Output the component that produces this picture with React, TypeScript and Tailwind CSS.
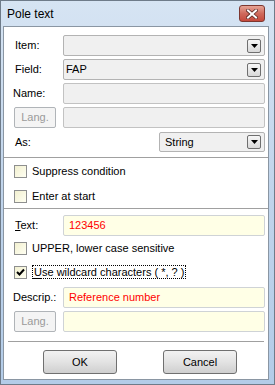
import React from "react";

function DropBtn() {
  return (
    <div className="w-[14px] h-[14px] shrink-0 border border-[#6f6f6f] rounded-[2px] bg-gradient-to-b from-[#f7f7f7] to-[#d9d9d9] flex items-center justify-center">
      <svg width="7" height="4" viewBox="0 0 7 4">
        <path d="M0 0H7L3.5 4Z" fill="#000" />
      </svg>
    </div>
  );
}

function Combo({ text }: { text?: string }) {
  return (
    <div className="flex-1 h-[21px] border border-[#b3b3b3] rounded-[2px] bg-[#f0f0f0] flex items-center pl-[2px] pr-[3px]">
      <span className="flex-1 text-black">{text}</span>
      <DropBtn />
    </div>
  );
}

function Disabled() {
  return <div className="flex-1 h-[21px] border border-[#c2c2c2] rounded-[2px] bg-[#f0f0f0]" />;
}

function Yellow({ text }: { text?: string }) {
  return (
    <div className="flex-1 h-[21px] border border-[#cfd3d6] rounded-[2px] bg-[#ffffe6] flex items-center pl-[5px] text-[#ff0000]">
      {text}
    </div>
  );
}

function LangBtn() {
  return (
    <div className="w-[42px] h-[21px] shrink-0 border border-[#b0b4b8] rounded-[2px] bg-[#f4f4f4] text-[#9a9a9a] flex items-center justify-center">
      Lang.
    </div>
  );
}

function Check({ checked }: { checked?: boolean }) {
  return (
    <div className="w-[13px] h-[13px] shrink-0 border border-[#8e8f8f] bg-gradient-to-br from-[#f2f0d0] to-[#fffff2] flex items-center justify-center">
      {checked && (
        <svg width="9" height="9" viewBox="0 0 9 9">
          <path d="M1 4L3.5 6.5L8 1.5" stroke="#000" strokeWidth="2" fill="none" />
        </svg>
      )}
    </div>
  );
}

function Row({ label, children, lx = 11 }: { label: React.ReactNode; children: React.ReactNode; lx?: number }) {
  return (
    <div className="flex items-center pr-[3px]">
      <div className={lx === 9 ? "w-[59px] pl-[9px]" : "w-[59px] pl-[11px]"}>{label}</div>
      {children}
    </div>
  );
}

export default function App() {
  return (
    <div className="w-[275px] h-[385px] border border-[#6e7b89] bg-gradient-to-b from-[#d6e4f3] via-[#c0d4eb] to-[#b3cce8] flex flex-col font-['Liberation_Sans',Arial,sans-serif] text-[11px] text-black leading-none select-none">
      <div className="h-[25px] flex items-center relative pl-[6px]">
        <span className="text-[12px] text-black mt-[1px]">Pole text</span>
        <div className="absolute left-[238px] top-[4px] w-[26px] h-[17px] rounded-[3px] border border-[#7d3730] bg-gradient-to-b from-[#e6a496] via-[#cf6a5c] to-[#c5493c] flex items-center justify-center">
          <svg width="12" height="10" viewBox="0 0 12 10">
            <path d="M2 1.5L10 8.5M10 1.5L2 8.5" stroke="#5b2a25" strokeWidth="3.6" strokeLinecap="square" />
            <path d="M2 1.5L10 8.5M10 1.5L2 8.5" stroke="#fff" strokeWidth="2" strokeLinecap="square" />
          </svg>
        </div>
      </div>
      <div className="ml-[2px] mr-[5px] mb-[4px] flex-1 border border-[#8a96a3] bg-white flex flex-col">
        <div className="mt-[8px]">
          <Row label="Item:">
            <Combo />
          </Row>
        </div>
        <div className="mt-[3px]">
          <Row label="Field:">
            <Combo text="FAP" />
          </Row>
        </div>
        <div className="mt-[3px]">
          <Row label="Name:" lx={9}>
            <Disabled />
          </Row>
        </div>
        <div className="mt-[3px] flex items-center pr-[3px] pl-[10px]">
          <LangBtn />
          <div className="w-[7px]" />
          <Disabled />
        </div>
        <div className="mt-[4px] flex items-center pr-[3px]">
          <div className="w-[155px] pl-[11px]">As:</div>
          <div className="flex-1 h-[20px] border border-[#b3b3b3] rounded-[2px] bg-[#f0f0f0] flex items-center pl-[5px] pr-[3px]">
            <span className="flex-1">String</span>
            <DropBtn />
          </div>
        </div>
        <div className="mt-[5px] h-px bg-[#a0a0a0]" />
        <div className="mt-[7px] h-[13px] flex items-center pl-[10px] gap-[5px]">
          <Check />
          <span>Suppress condition</span>
        </div>
        <div className="mt-[12px] h-[13px] flex items-center pl-[10px] gap-[5px]">
          <Check />
          <span>Enter at start</span>
        </div>
        <div className="mt-[5px] h-px bg-[#a0a0a0]" />
        <div className="mt-[6px]">
          <Row label={<span><span className="underline">T</span>ext:</span>}>
            <Yellow text="123456" />
          </Row>
        </div>
        <div className="mt-[6px] h-[13px] flex items-center pl-[10px] gap-[5px]">
          <Check />
          <span>UPPER, lower case sensitive</span>
        </div>
        <div className="mt-[10px] h-[14px] flex items-center pl-[10px] gap-[5px]">
          <Check checked />
          <span className="h-[14px] border border-dotted border-black flex items-center px-[1px] underline-offset-2">
            <span><span className="underline">U</span>se wildcard characters ( *, ? )</span>
          </span>
        </div>
        <div className="mt-[8px]">
          <Row label="Descrip.:" lx={9}>
            <Yellow text="Reference number" />
          </Row>
        </div>
        <div className="mt-[3px] flex items-center pr-[3px] pl-[10px]">
          <LangBtn />
          <div className="w-[7px]" />
          <Yellow />
        </div>
        <div className="mt-[9px] h-px bg-[#a0a0a0] ml-[4px] mr-[4px]" />
        <div className="mt-[8px] flex pl-[39px] gap-[46px]">
          <div className="w-[74px] h-[24px] rounded-[3px] border border-[#707070] bg-gradient-to-b from-[#f2f2f2] via-[#e3e3e3] to-[#cfcfcf] flex items-center justify-center">
            OK
          </div>
          <div className="w-[74px] h-[24px] rounded-[3px] border border-[#707070] bg-gradient-to-b from-[#f2f2f2] via-[#e3e3e3] to-[#cfcfcf] flex items-center justify-center">
            Cancel
          </div>
        </div>
      </div>
    </div>
  );
}
